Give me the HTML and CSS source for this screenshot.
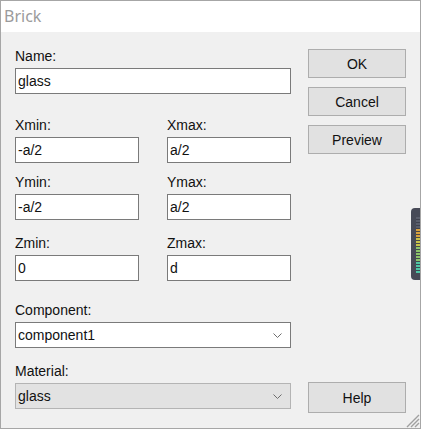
FILE: index.html
```html
<!DOCTYPE html>
<html>
<head>
<meta charset="utf-8">
<link rel="stylesheet" href="styles.css">
</head>
<body>
<div class="window">
  <div class="titlebar"><span class="title">Brick</span></div>
  <div class="content">
    <div class="form">
      <div class="field f-name">
        <label>Name:</label>
        <div class="input">glass</div>
      </div>
      <div class="row r-x">
        <div class="field"><label>Xmin:</label><div class="input">-a/2</div></div>
        <div class="field"><label>Xmax:</label><div class="input">a/2</div></div>
      </div>
      <div class="row r-y">
        <div class="field"><label>Ymin:</label><div class="input">-a/2</div></div>
        <div class="field"><label>Ymax:</label><div class="input">a/2</div></div>
      </div>
      <div class="row r-z">
        <div class="field"><label>Zmin:</label><div class="input">0</div></div>
        <div class="field"><label>Zmax:</label><div class="input">d</div></div>
      </div>
      <div class="field f-comp">
        <label>Component:</label>
        <div class="select">
          <span>component1</span>
          <svg class="chev" width="9" height="5" viewBox="0 0 9 5"><path d="M0.5 0.5 L4.5 4.5 L8.5 0.5" fill="none" stroke="#6d6d6d" stroke-width="1"/></svg>
        </div>
      </div>
      <div class="field f-mat">
        <label>Material:</label>
        <div class="select disabled">
          <span>glass</span>
          <svg class="chev" width="9" height="5" viewBox="0 0 9 5"><path d="M0.5 0.5 L4.5 4.5 L8.5 0.5" fill="none" stroke="#6d6d6d" stroke-width="1"/></svg>
        </div>
      </div>
    </div>
    <div class="buttons">
      <div class="btn">OK</div>
      <div class="btn">Cancel</div>
      <div class="btn">Preview</div>
      <div class="btn help">Help</div>
    </div>
  </div>
  <div class="sidewidget"></div>
  <svg class="grip" width="16" height="16" viewBox="0 0 16 16">
    <path d="M15 3 L3 15 M15 7 L7 15 M15 11 L11 15" stroke="#a0a0a0" stroke-width="1.4"/>
  </svg>
</div>
</body>
</html>
```
FILE: styles.css
```css
html, body {
  margin: 0;
  padding: 0;
  background: #ffffff;
}

.window {
  position: relative;
  width: 421px;
  height: 429px;
  box-sizing: border-box;
  border: 1px solid #a6a6a6;
  background: #f0f0f0;
  display: flex;
  flex-direction: column;
  font-family: "Liberation Sans", Arial, sans-serif;
  font-size: 14px;
  color: #111;
  overflow: hidden;
}

.titlebar {
  height: 31px;
  flex: none;
  background: #ffffff;
  line-height: 31px;
  padding-left: 3px;
}

.title {
  font-family: "Noto Sans", "Open Sans", sans-serif;
  font-size: 16px;
  color: #9b9b9b;
}

.content {
  flex: 1;
  display: flex;
  padding: 16px 0 0 14px;
}

.form {
  width: 276px;
  display: flex;
  flex-direction: column;
}

.field {
  display: flex;
  flex-direction: column;
  gap: 4px;
}

label {
  display: block;
  height: 16px;
  line-height: 16px;
}

.input {
  height: 26px;
  box-sizing: border-box;
  border: 1px solid #7a7a7a;
  background: #ffffff;
  line-height: 24px;
  padding-left: 2px;
}

.row {
  display: grid;
  grid-template-columns: 124px 124px;
  column-gap: 28px;
}

.r-x { margin-top: 23px; }
.r-y { margin-top: 11px; }
.r-z { margin-top: 15px; }
.f-comp { margin-top: 21px; }
.f-mat { margin-top: 15px; }

.select {
  height: 26px;
  box-sizing: border-box;
  border: 1px solid #7a7a7a;
  background: #ffffff;
  line-height: 24px;
  padding: 0 8px 0 2px;
  display: flex;
  align-items: center;
  justify-content: space-between;
}

.select.disabled {
  background: #e2e2e2;
  border-color: #b4b4b4;
}

.chev {
  display: block;
}

.buttons {
  width: 98px;
  margin-left: 17px;
  display: flex;
  flex-direction: column;
  gap: 9px;
  padding: 1px 0 15px 0;
}

.btn {
  height: 29px;
  box-sizing: border-box;
  border: 1px solid #adadad;
  background: #e1e1e1;
  text-align: center;
  line-height: 28px;
}

.btn.help {
  margin-top: auto;
  height: 31px;
  line-height: 30px;
}

.sidewidget {
  position: absolute;
  left: 410px;
  top: 207px;
  width: 12px;
  height: 72px;
  border-radius: 4px 0 0 4px;
  background:
    repeating-linear-gradient(to bottom, transparent 0 2px, rgba(60,63,75,0.9) 2px 3px) 5px 9px / 7px 56px no-repeat,
    linear-gradient(to bottom, #5a5e6c 0 12px, #d9a13e 12px 20px, #c9c24a 20px 30px, #8cc46a 30px 44px, #4dc6a6 44px 56px) 5px 9px / 7px 56px no-repeat,
    #474a57;
}

.grip {
  position: absolute;
  right: 0;
  bottom: 0;
}
```
